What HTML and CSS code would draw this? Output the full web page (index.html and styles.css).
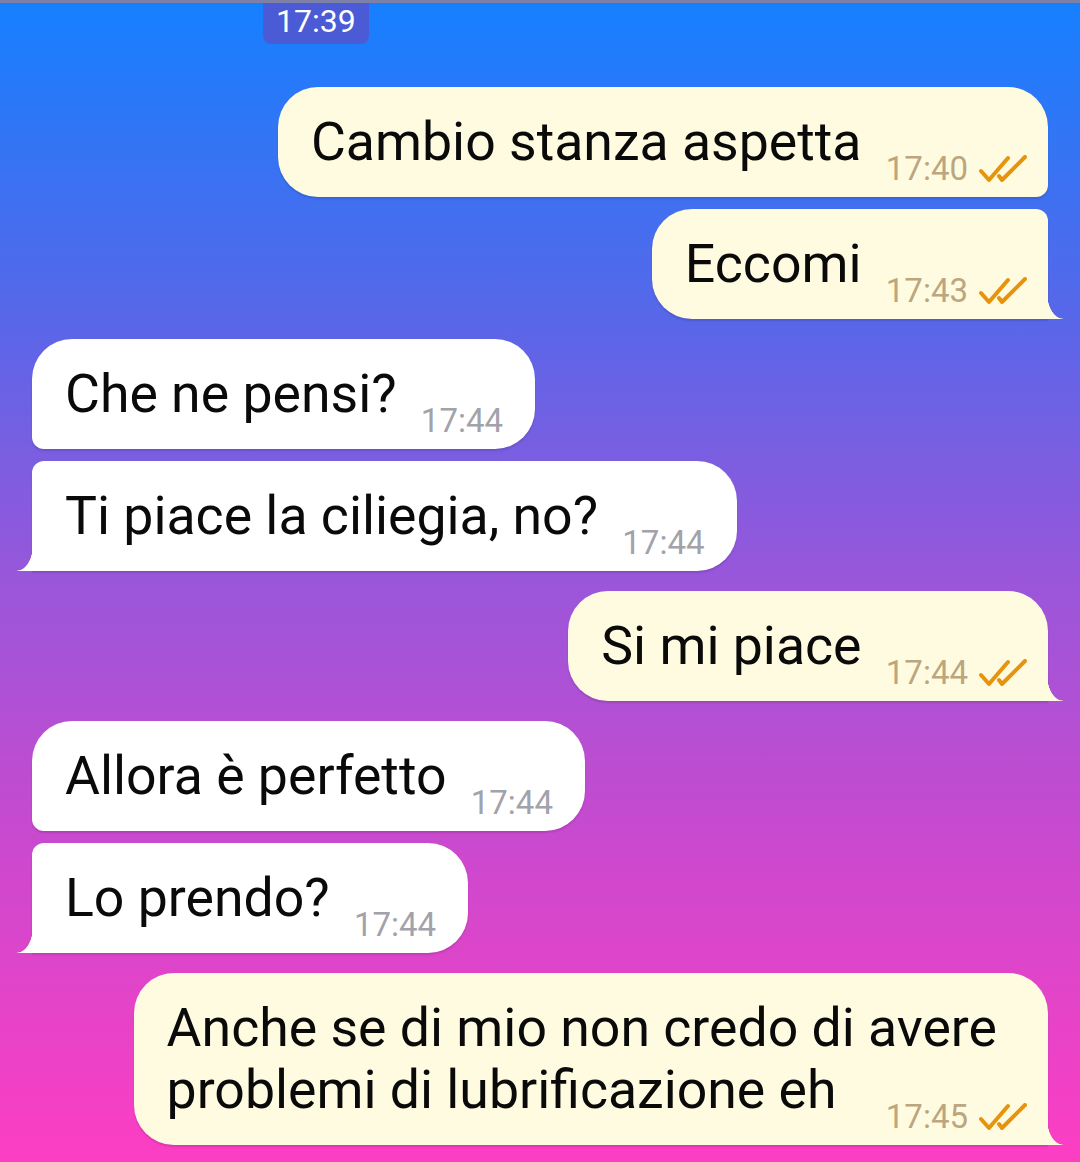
FILE: index.html
```html
<!DOCTYPE html>
<html lang="it">
<head>
  <meta charset="UTF-8" />
  <meta name="viewport" content="width=device-width, initial-scale=1.0" />
  <title>Chat</title>
  <link rel="stylesheet" href="styles.css">
</head>
<body>

<div class="chat">
  <div class="day-badge">17:39</div>

  <div class="msg out first">
    <span class="text">Cambio stanza aspetta</span>
    <span class="meta"><span class="time">17:40</span><svg class="ticks" viewBox="0 0 48 28"><path d="M2 16 L10 25 L29 3 M20 21 L23 25 L46 2"/></svg></span>
  </div>
  <div class="msg out last">
    <span class="text">Eccomi</span>
    <span class="meta"><span class="time">17:43</span><svg class="ticks" viewBox="0 0 48 28"><path d="M2 16 L10 25 L29 3 M20 21 L23 25 L46 2"/></svg></span>
  </div>

  <div class="msg in first">
    <span class="text">Che ne pensi?</span>
    <span class="meta"><span class="time">17:44</span></span>
  </div>
  <div class="msg in last">
    <span class="text">Ti piace la ciliegia, no?</span>
    <span class="meta"><span class="time">17:44</span></span>
  </div>

  <div class="msg out first last">
    <span class="text">Si mi piace</span>
    <span class="meta"><span class="time">17:44</span><svg class="ticks" viewBox="0 0 48 28"><path d="M2 16 L10 25 L29 3 M20 21 L23 25 L46 2"/></svg></span>
  </div>

  <div class="msg in first">
    <span class="text">Allora è perfetto</span>
    <span class="meta"><span class="time">17:44</span></span>
  </div>
  <div class="msg in last">
    <span class="text">Lo prendo?</span>
    <span class="meta"><span class="time">17:44</span></span>
  </div>

  <div class="msg out first last long">
    <span class="text">Anche se di mio non credo di avere<br>problemi di lubrificazione eh</span>
    <span class="meta"><span class="time">17:45</span><svg class="ticks" viewBox="0 0 48 28"><path d="M2 16 L10 25 L29 3 M20 21 L23 25 L46 2"/></svg></span>
  </div>
</div>

</body>
</html>
```

FILE: styles.css
```css
html {
  height: 100%;
}

body {
  margin: 0;
  min-height: 100%;
  border-top: 3px solid #7d80a8;
  box-sizing: border-box;
  font-family: Roboto, 'Noto Sans', sans-serif;
  background: linear-gradient(180deg, #1580ff 0%, #5a66e8 28%, #9a56da 50%, #cf48cd 75%, #fd3ec3 100%);
  color: #0a0a0a;
}

.chat {
  display: flex;
  flex-direction: column;
  padding: 0 32px;
}

.day-badge {
  align-self: flex-start;
  margin-left: 231px;
  padding: 0 13px;
  height: 41px;
  line-height: 36px;
  font-size: 32px;
  color: #fff;
  background-color: #4b5bd6;
  border-radius: 0 0 8px 8px;
  margin-bottom: 23px;
}

.msg {
  position: relative;
  max-width: 880px;
  padding: 24px 21px 24px 33px;
  font-size: 53.6px;
  line-height: 62px;
  box-shadow: 0 2px 2px rgba(0, 0, 0, 0.12);
}

.msg + .msg {
  margin-top: 12px;
}

.msg.first {
  margin-top: 20px;
}

.msg.out {
  align-self: flex-end;
  background-color: #fffbe0;
  border-radius: 40px 12px 12px 40px;
}

.msg.out.first {
  border-top-right-radius: 40px;
}

.msg.out.last {
  border-bottom-right-radius: 0;
}

.msg.in {
  align-self: flex-start;
  background-color: #fff;
  padding-right: 32px;
  border-radius: 12px 40px 40px 12px;
}

.msg.in.first {
  border-top-left-radius: 40px;
}

.msg.in.last {
  border-bottom-left-radius: 0;
}

.msg.last::after {
  content: "";
  position: absolute;
  bottom: 0;
  width: 16px;
  height: 26px;
}

.msg.out.last::after {
  right: -15px;
  background: radial-gradient(ellipse 16px 26px at 100% 0, transparent 97%, #fffbe0 100%);
}

.msg.in.last::after {
  left: -15px;
  background: radial-gradient(ellipse 16px 26px at 0 0, transparent 97%, #fff 100%);
}

.meta {
  display: inline-flex;
  align-items: center;
  gap: 11px;
  height: 0;
  margin-left: 11px;
  line-height: 0;
  vertical-align: -20px;
}

.msg.long .meta {
  margin-left: 36px;
}

.time {
  font-size: 33px;
  line-height: 0;
}

.out .time {
  color: #bba67e;
}

.in .time {
  color: #a2a2aa;
}

.ticks {
  flex: none;
  width: 48px;
  height: 28px;
  fill: none;
  stroke: #e8930c;
  stroke-width: 4;
  stroke-linecap: round;
  stroke-linejoin: round;
}
```
